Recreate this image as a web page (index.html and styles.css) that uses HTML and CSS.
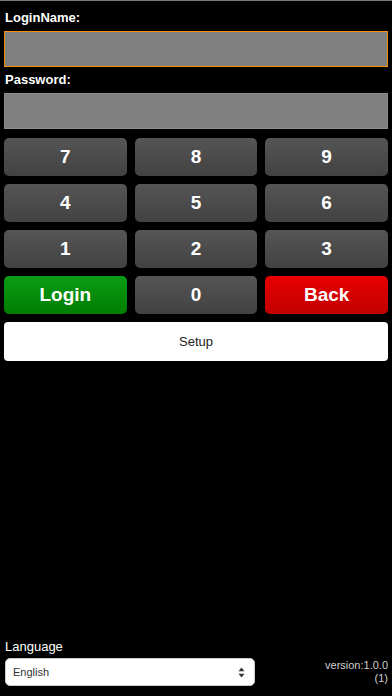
FILE: index.html
```html
<!DOCTYPE html>
<html>
<head>
<meta charset="utf-8">
<link rel="stylesheet" href="styles.css">
</head>
<body>
<div class="page">
  <div class="form">
    <div class="label first">LoginName:</div>
    <div class="input focused"></div>
    <div class="label">Password:</div>
    <div class="input"></div>
    <div class="keypad">
      <div class="key">7</div>
      <div class="key">8</div>
      <div class="key">9</div>
      <div class="key">4</div>
      <div class="key">5</div>
      <div class="key">6</div>
      <div class="key">1</div>
      <div class="key">2</div>
      <div class="key">3</div>
      <div class="key login">Login</div>
      <div class="key">0</div>
      <div class="key back">Back</div>
    </div>
    <div class="setup">Setup</div>
  </div>
  <div class="footer">
    <div class="lang">
      <div class="lang-label">Language</div>
      <div class="select">
        <span>English</span>
        <svg width="7" height="11" viewBox="0 0 7 11"><path d="M3.5 0.5 L6.5 4.2 H0.5 Z M3.5 10.5 L6.5 6.8 H0.5 Z" fill="#333"/></svg>
      </div>
    </div>
    <div class="version">version:1.0.0<br>(1)</div>
  </div>
</div>
</body>
</html>
```
FILE: styles.css
```css
html, body {
  margin: 0;
  padding: 0;
  background: #000;
}
body {
  font-family: "Liberation Sans", Arial, sans-serif;
  color: #fff;
}
.page {
  min-height: 696px;
  box-sizing: border-box;
  border-top: 1px solid #7a7a7a;
  display: flex;
  flex-direction: column;
  justify-content: space-between;
  padding: 0 4px 10px 4px;
}
.form {
  display: flex;
  flex-direction: column;
}
.label {
  font-size: 13px;
  font-weight: bold;
  line-height: 16px;
  margin-top: 5px;
  padding-left: 1px;
  margin-bottom: 5px;
}
.label.first {
  margin-top: 9px;
}
.input {
  height: 36px;
  box-sizing: border-box;
  background: #808080;
  border: 1px solid #8e8e8e;
}
.input.focused {
  border: 1px solid #f0900a;
}
.keypad {
  margin-top: 9px;
  display: grid;
  grid-template-columns: 1fr 1fr 1fr;
  gap: 8px;
}
.key {
  height: 38px;
  border-radius: 5px;
  background: linear-gradient(#555555, #424242);
  display: flex;
  align-items: center;
  justify-content: center;
  font-size: 19px;
  font-weight: bold;
  color: #fff;
}
.key.login {
  background: linear-gradient(#0b9c15, #007d00);
  font-size: 19px;
}
.key.back {
  background: linear-gradient(#e80000, #c20000);
  font-size: 19px;
}
.setup {
  margin-top: 8px;
  height: 39px;
  background: #fff;
  border-radius: 4px;
  display: flex;
  align-items: center;
  justify-content: center;
  font-size: 13px;
  color: #222;
}
.footer {
  display: flex;
  align-items: flex-end;
  justify-content: space-between;
}
.lang {
  display: flex;
  flex-direction: column;
  padding-left: 1px;
}
.lang-label {
  font-size: 13px;
  line-height: 16px;
  margin-bottom: 3px;
}
.select {
  width: 250px;
  height: 28px;
  box-sizing: border-box;
  background: #fff;
  border-radius: 5px;
  border: 1px solid #ccc;
  display: flex;
  align-items: center;
  justify-content: space-between;
  padding: 0 9px 0 7px;
  font-size: 11px;
  color: #333;
}
.version {
  font-size: 11px;
  line-height: 13px;
  color: #cfcfcf;
  text-align: right;
  margin-bottom: 1px;
}
```
